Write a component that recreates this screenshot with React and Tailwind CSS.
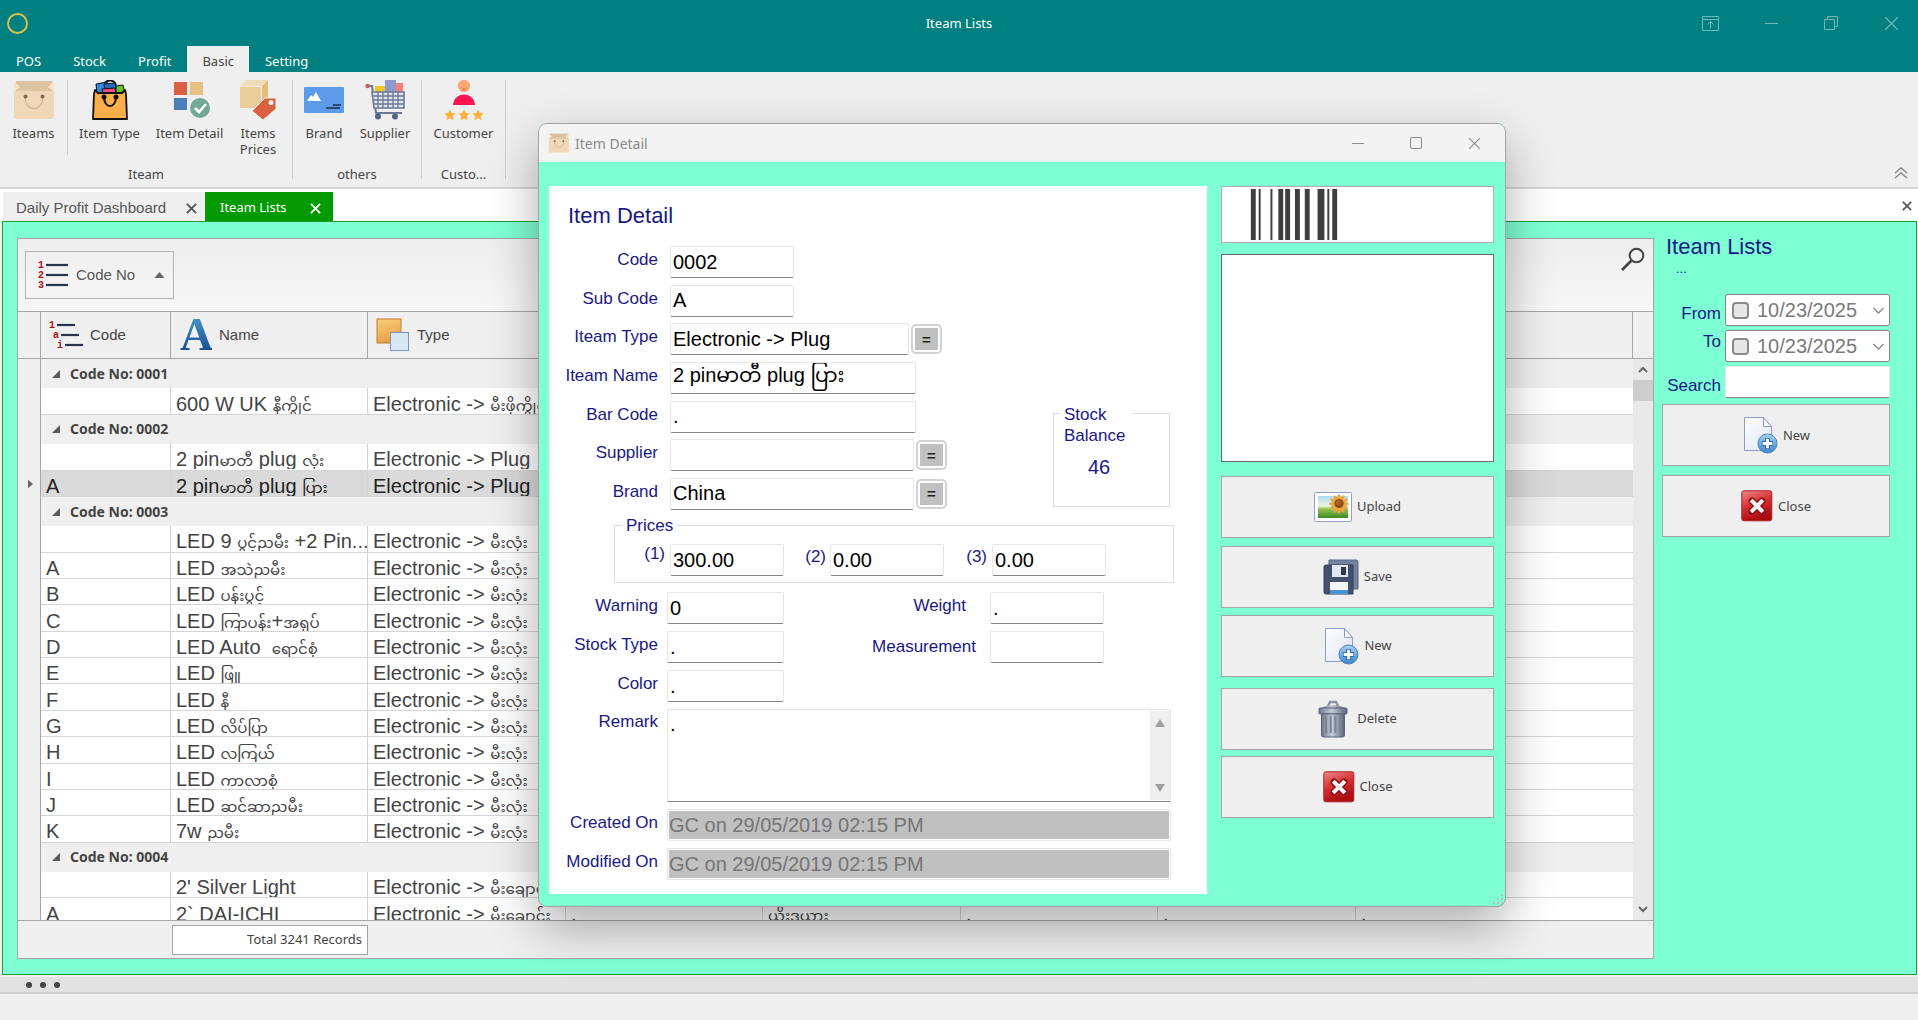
import React from "react";

const UI = "font-['Noto_Sans',sans-serif]";

/* ---------- icons ---------- */

function BagIcon({ className }) {
  return (
    <svg viewBox="0 0 40 40" className={className} aria-hidden="true">
      <rect x="0" y="8" width="40" height="31" rx="2" fill="#efd7b8" />
      <path d="M2 1h36l2 10H0z" fill="#dcc3a1" />
      <path d="M0 1l6 6-6 5zM40 1l-6 6 6 5z" fill="#f6e3ca" />
      <path d="M11 16c0 17 18 17 18 0" fill="none" stroke="#d3bb98" strokeWidth="1.5" />
      <circle cx="11.500" cy="16.500" r="2" fill="#7d6a55" />
      <circle cx="28.500" cy="16.500" r="2" fill="#7d6a55" />
    </svg>
  );
}

function ItemTypeIcon() {
  return (
    <svg viewBox="0 0 40 40" className="size-10" aria-hidden="true">
      <path d="M14 5c2-6 10-6 12 0" fill="none" stroke="#111" strokeWidth="2" />
      <path d="M6 4l11-2 2 9-12 3z" fill="#2d8ce0" stroke="#111" />
      <path d="M14 4l11-1 2 6-12 2z" fill="#1f6fc0" stroke="#111" />
      <path d="M26 6l7-1 2 8-9 1z" fill="#66c423" stroke="#111" />
      <path d="M12 9l13-1 1 6-13 1z" fill="#ee4c8b" stroke="#111" />
      <path d="M5 10l3 3h24l3-3 1 4 1 25H3l1-25z" fill="#fbae4a" stroke="#111" strokeWidth="1.800" strokeLinejoin="round" />
      <path d="M14 17c0 12 12 12 12 0" fill="none" stroke="#111" strokeWidth="2" />
      <circle cx="14" cy="17" r="2.500" fill="#111" />
      <circle cx="26" cy="17" r="2.500" fill="#111" />
    </svg>
  );
}

function ItemDetailIcon() {
  return (
    <svg viewBox="0 0 40 40" className="size-10" aria-hidden="true">
      <rect x="4" y="2" width="13" height="13" fill="#d9613f" />
      <rect x="20" y="2" width="13" height="13" fill="#e8c180" />
      <rect x="4" y="18" width="13" height="12" fill="#4a7fb9" />
      <circle cx="30" cy="28" r="10" fill="#74a998" />
      <path d="M25 28l4 4 7-8" fill="none" stroke="#fff" strokeWidth="2.600" />
    </svg>
  );
}

function PricesIcon() {
  return (
    <svg viewBox="0 0 40 40" className="size-10" aria-hidden="true">
      <path d="M2 6l6-6h22l-6 6z" fill="#efdcb9" />
      <path d="M24 6l6-6v18l-6 4z" fill="#e5bd78" />
      <rect x="2" y="7" width="21" height="21" fill="#ebcd9c" />
      <path d="M27 18h11v11L25 40 14 31z" fill="#d9613f" stroke="#efefef" />
      <circle cx="33" cy="22.500" r="2.500" fill="#efefef" />
    </svg>
  );
}

function BrandIcon() {
  return (
    <svg viewBox="0 0 40 40" className="size-10" aria-hidden="true">
      <rect x="0" y="7" width="40" height="26" rx="1" fill="#5c9bea" />
      <path d="M3 21l4-6 2 2 3-5 5 9z" fill="#fff" />
      <path d="M29 25h8M22 28h14" stroke="#2c4875" strokeWidth="1.800" />
    </svg>
  );
}

function SupplierIcon() {
  return (
    <svg viewBox="0 0 40 40" className="size-10" aria-hidden="true">
      <rect x="10" y="6" width="10" height="7" fill="#efc52a" />
      <rect x="30" y="3" width="8" height="10" fill="#f77f7c" />
      <rect x="20" y="0" width="11" height="13" fill="#8f9bcd" />
      <circle cx="2.500" cy="6" r="2.200" fill="#e0575b" />
      <path d="M4 6h3l4 27h26" fill="none" stroke="#6d7896" strokeWidth="2" />
      <path d="M7 12h32v16H9z" fill="#dfe3ec" stroke="#6d7896" strokeWidth="1.600" />
      <path d="M7 16h32M8 20h31M8 24h31M13 12v16M18 12v16M23 12v16M28 12v16M33 12v16" stroke="#6d7896" strokeWidth="1.300" />
      <circle cx="13" cy="36.500" r="3" fill="#566389" />
      <circle cx="30" cy="36.500" r="3" fill="#566389" />
    </svg>
  );
}

function CustomerIcon() {
  const star = "M0-5.500l1.700 3.600 3.900.5-2.900 2.700.8 3.900L0 3.300l-3.500 1.900.8-3.900-2.900-2.700 3.900-.5z";
  return (
    <svg viewBox="0 0 40 40" className="size-10" aria-hidden="true">
      <circle cx="20" cy="6" r="6.200" fill="#fca97a" />
      <path d="M17.500 8c1 1.600 4 1.600 5 0" fill="none" stroke="#d2693c" />
      <path d="M9 25c1-14 21-14 22 0z" fill="#fb1452" />
      {[6, 20, 34].map((x) => (
        <path key={x} d={star} transform={`translate(${x} 35)`} fill="#fbb13c" />
      ))}
    </svg>
  );
}

function NumberListIcon({ marks, step, className }) {
  return (
    <svg viewBox="0 0 34 32" className={className} aria-hidden="true">
      {marks.map((m, i) => (
        <g key={i}>
          <text x={i * step} y={9 + i * 10} fontSize="10" fontWeight="700" fontFamily="Liberation Mono, monospace" fill="#a31621">
            {m}
          </text>
          <path d={`M${8 + i * step} ${6 + i * 10}h${step ? 18 : 22}`} stroke="#27324c" strokeWidth="2.200" />
        </g>
      ))}
    </svg>
  );
}

function LetterIcon() {
  return (
    <span
      aria-hidden="true"
      className="inline-block w-[32px] bg-linear-to-b from-[#4fa0cf] to-[#123f86] bg-clip-text text-center font-['Liberation_Serif',serif] text-[46px] leading-[46px] font-bold text-transparent"
    >
      A
    </span>
  );
}

function LayersIcon() {
  return (
    <svg viewBox="0 0 34 36" className="h-9 w-[34px]" aria-hidden="true">
      <defs>
        <linearGradient id="gold" x1="0" y1="0" x2="0.300" y2="1">
          <stop offset="0" stopColor="#f8cf78" />
          <stop offset="1" stopColor="#e9a04a" />
        </linearGradient>
      </defs>
      <rect x="1" y="2" width="24" height="24" fill="url(#gold)" stroke="#c47a34" />
      <rect x="14.500" y="15.500" width="18" height="18" fill="#d9e6f3" stroke="#7d92bd" />
    </svg>
  );
}

function PictureIcon() {
  return (
    <svg viewBox="0 0 38 30" className="h-[30px] w-[38px]" aria-hidden="true">
      <defs>
        <linearGradient id="sky" x1="0" y1="0" x2="0" y2="1">
          <stop offset="0" stopColor="#a9d8f4" />
          <stop offset="0.450" stopColor="#eaf6dc" />
          <stop offset="0.600" stopColor="#8fc04d" />
          <stop offset="1" stopColor="#3f8a25" />
        </linearGradient>
      </defs>
      <rect x="0.500" y="0.500" width="37" height="29" rx="1" fill="#fff" stroke="#8ea0cb" />
      <rect x="4" y="4" width="30" height="22" fill="url(#sky)" />
      <g fill="#eaa747">
        {[0, 30, 60, 90, 120, 150].map((a) => (
          <ellipse key={a} cx="25" cy="12" rx="10" ry="2.500" transform={`rotate(${a} 25 12)`} />
        ))}
      </g>
      <circle cx="25" cy="11.500" r="4.600" fill="#8a4a18" />
      <circle cx="24.500" cy="10.500" r="2.600" fill="#a96527" />
    </svg>
  );
}

function SaveIcon() {
  return (
    <svg viewBox="0 0 36 36" className="size-9" aria-hidden="true">
      <path d="M6 1h27a2 2 0 012 2v27h-5V6H6z" fill="#73839f" stroke="#5b6985" />
      <path d="M3 6h27v29H3a2 2 0 01-2-2V8a2 2 0 012-2z" fill="#44506e" stroke="#38425c" />
      <rect x="9" y="6" width="16" height="12" fill="#dfe7f3" />
      <rect x="18" y="8" width="5" height="8" fill="#2f3850" />
      <rect x="7" y="23" width="18" height="12" fill="#f2f6fb" />
      <rect x="7" y="31" width="18" height="4" fill="#4c93d4" />
    </svg>
  );
}

function NewIcon() {
  return (
    <svg viewBox="0 0 36 38" className="h-[38px] w-9" aria-hidden="true">
      <defs>
        <linearGradient id="page" x1="0" y1="0" x2="1" y2="1">
          <stop offset="0" stopColor="#ffffff" />
          <stop offset="1" stopColor="#dce4f3" />
        </linearGradient>
        <linearGradient id="plus" x1="0" y1="0" x2="0" y2="1">
          <stop offset="0" stopColor="#a5d3f2" />
          <stop offset="1" stopColor="#3c86cc" />
        </linearGradient>
      </defs>
      <path d="M2.500 1.500h19l8 9v24h-27z" fill="url(#page)" stroke="#8c9cc8" />
      <path d="M21.500 1.500v9h8z" fill="#fff" stroke="#8c9cc8" />
      <circle cx="25.500" cy="27.500" r="9.500" fill="url(#plus)" stroke="#4b83bb" />
      <path d="M25.500 22v11M20 27.500h11" stroke="#3468a5" strokeWidth="5" />
      <path d="M25.500 22.700v9.600M20.700 27.500h9.600" stroke="#fff" strokeWidth="2.800" />
    </svg>
  );
}

function TrashIcon() {
  return (
    <svg viewBox="0 0 30 38" className="h-[38px] w-[30px]" aria-hidden="true">
      <defs>
        <linearGradient id="bin" x1="0" y1="0" x2="1" y2="0">
          <stop offset="0" stopColor="#6e778c" />
          <stop offset="0.450" stopColor="#c6cbd7" />
          <stop offset="1" stopColor="#5a6379" />
        </linearGradient>
      </defs>
      <path d="M10 6l2-4h6l2 4" fill="none" stroke="#8a92a4" strokeWidth="2.500" />
      <path d="M3 9c3-5 21-5 24 0z" fill="url(#bin)" />
      <rect x="1" y="8" width="28" height="6" rx="1" fill="url(#bin)" stroke="#5a6379" />
      <path d="M3.500 14h23v21a2 2 0 01-2 2h-19a2 2 0 01-2-2z" fill="url(#bin)" stroke="#5a6379" />
      <path d="M8 16v17M12.700 16v17M17.400 16v17M22 16v17" stroke="#7c8498" strokeWidth="2" />
    </svg>
  );
}

function RedCloseIcon() {
  return (
    <svg viewBox="0 0 32 32" className="size-8" aria-hidden="true">
      <defs>
        <linearGradient id="red" x1="0" y1="0" x2="0.400" y2="1">
          <stop offset="0" stopColor="#ee8a88" />
          <stop offset="0.500" stopColor="#d73336" />
          <stop offset="1" stopColor="#aa0c10" />
        </linearGradient>
      </defs>
      <rect x="0.800" y="0.800" width="30" height="30" rx="2" fill="url(#red)" stroke="#a92024" />
      <path d="M11 11l10 10M21 11L11 21" stroke="#8e1115" strokeWidth="7" strokeLinecap="round" />
      <path d="M11.500 11.500l9 9M20.500 11.500l-9 9" stroke="#f6f2f4" strokeWidth="4" strokeLinecap="square" />
    </svg>
  );
}

function Cross({ className, width = 1.2 }) {
  return (
    <svg viewBox="0 0 12 12" className={className} aria-hidden="true">
      <path d="M1 1l10 10M11 1L1 11" stroke="currentColor" strokeWidth={width} fill="none" />
    </svg>
  );
}

/* ---------- title bar and ribbon ---------- */

function TitleBar() {
  return (
    <header className={`${UI} flex h-[72px] shrink-0 flex-col bg-[#008080] text-[13px] text-white`}>
      <div className="grid h-[46px] grid-cols-[1fr_auto_1fr] items-center px-[7px]">
        <span className="size-[21px] rounded-full border-2 border-[#d9c04f]" />
        <h1 className="pt-[2px]">Iteam Lists</h1>
        <div className="flex items-center justify-end gap-[46px] pr-3 text-[#6fb9b9]">
          <button aria-label="Ribbon display options">
            <svg viewBox="0 0 17 15" className="h-[15px] w-[17px]" fill="none" stroke="currentColor">
              <path d="M.5.500h16v14H.5zM.5 3.500h16M8.500 12.500V5.500M5.500 8.500l3-3 3 3" />
            </svg>
          </button>
          <button aria-label="Minimize" className="py-2">
            <span className="block h-px w-[13px] bg-current" />
          </button>
          <button aria-label="Restore">
            <svg viewBox="0 0 14 14" className="size-[14px]" fill="none" stroke="currentColor">
              <path d="M.5 3.500h10v10H.5zM3.500 3V.5h10v10H11" />
            </svg>
          </button>
          <button aria-label="Close window">
            <Cross className="size-[15px]" width={0.9} />
          </button>
        </div>
      </div>
      <nav className="flex h-[26px] items-stretch">
        {["POS", "Stock", "Profit", "Basic", "Setting"].map((t) => (
          <button
            key={t}
            className={
              t === "Basic" ? "bg-[#efefef] px-[15px] pt-1.5 text-[#444]" : "px-4 pt-1.5"
            }
          >
            {t}
          </button>
        ))}
      </nav>
    </header>
  );
}

function RibbonButton({ icon, label, className }) {
  return (
    <button className={`flex flex-col items-center gap-[5px] px-1 leading-4 ${className}`}>
      {icon}
      <span>{label}</span>
    </button>
  );
}

function RibbonGroup({ title, children, className }) {
  return (
    <section className={`my-2 flex flex-col border-r border-[#d0d0d0] ${className}`}>
      <div className="flex flex-1">{children}</div>
      <h2 className="text-center leading-[10px]">{title}</h2>
    </section>
  );
}

function Ribbon() {
  return (
    <div className={`${UI} flex h-[117px] shrink-0 border-b-2 border-[#d6d6d6] bg-[#efefef] text-[13px] text-[#444]`}>
      <RibbonGroup title="Iteam" className="w-[293px]">
        <RibbonButton icon={<BagIcon className="size-10" />} label="Iteams" className="w-[67px]" />
        <div className="mb-[14px] border-r border-[#d0d0d0]" />
        <RibbonButton icon={<ItemTypeIcon />} label="Item Type" className="w-[83px]" />
        <RibbonButton icon={<ItemDetailIcon />} label="Item Detail" className="w-[77px]" />
        <RibbonButton icon={<PricesIcon />} label={<>Items<br />Prices</>} className="w-[60px]" />
      </RibbonGroup>
      <RibbonGroup title="others" className="w-[129px]">
        <RibbonButton icon={<BrandIcon />} label="Brand" className="w-[62px]" />
        <RibbonButton icon={<SupplierIcon />} label="Supplier" className="w-[60px]" />
      </RibbonGroup>
      <RibbonGroup title="Custo..." className="w-[84px]">
        <RibbonButton icon={<CustomerIcon />} label="Customer" className="w-[84px]" />
      </RibbonGroup>
      <button aria-label="Collapse ribbon" className="mt-auto mr-[10px] mb-2 ml-auto text-[#8a8a8a]">
        <svg viewBox="0 0 14 12" className="h-3 w-[14px]" fill="none" stroke="currentColor" strokeWidth="1.600">
          <path d="M1 6l6-5 6 5M1 11l6-5 6 5" />
        </svg>
      </button>
    </div>
  );
}

function DocumentTabs() {
  return (
    <div className="flex h-8 shrink-0 items-end bg-white pl-[3px] text-[#555]">
      <div className="flex h-[29px] w-[202px] items-center justify-between bg-[#efefef] pt-[3px] pr-2 pl-[13px] text-[15px]">
        <button>Daily Profit Dashboard</button>
        <button aria-label="Close Daily Profit Dashboard">
          <Cross className="size-[11px]" width={2} />
        </button>
      </div>
      <div className="flex h-[29px] w-[128px] items-center justify-between bg-[#049a04] pt-[3px] pr-3 pl-[15px] text-white">
        <button className={`${UI} text-[13px]`}>Iteam Lists</button>
        <button aria-label="Close Iteam Lists">
          <Cross className="size-[11px]" width={2} />
        </button>
      </div>
      <button aria-label="Close tab group" className="mr-[6px] mb-[10px] ml-auto">
        <Cross className="size-[10px]" width={2} />
      </button>
    </div>
  );
}

/* ---------- item grid ---------- */

const BULB = "Electronic -> မီးလုံး";
const TUBE = "Electronic -> မီးချောင်း";

const GROUPS = [
  { code: "0001", rows: [["", "600 W UK နီကွိုင်", "Electronic -> မီးဖိုကွိုင်"]] },
  {
    code: "0002",
    rows: [
      ["", "2 pinမာတီ plug လုံး", "Electronic -> Plug"],
      ["A", "2 pinမာတီ plug ပြား", "Electronic -> Plug"],
    ],
  },
  {
    code: "0003",
    rows: [
      ["", "LED 9 ပွင့်ညမီး +2 Pin...", BULB],
      ["A", "LED အသဲညမီး", BULB],
      ["B", "LED ပန်းပွင့်", BULB],
      ["C", "LED ကြာပန်း+အရုပ်", BULB],
      ["D", "LED Auto  ရောင်စုံ", BULB],
      ["E", "LED ဖြူ", BULB],
      ["F", "LED နီ", BULB],
      ["G", "LED လိပ်ပြာ", BULB],
      ["H", "LED လကြယ်", BULB],
      ["I", "LED ကာလာစုံ", BULB],
      ["J", "LED ဆင်ဆာညမီး", BULB],
      ["K", "7w ညမီး", BULB],
    ],
  },
  {
    code: "0004",
    rows: [
      ["", "2' Silver Light", TUBE, ".", ".", ".", ".", "."],
      ["A", "2` DAI-ICHI", TUBE, ".", "ယိုးဒယား", ".", ".", "."],
    ],
  },
];

/* Burmese runs are set smaller than the Latin text beside them. */
function MixedText({ text = "" }) {
  return text.split(/([\u1000-\u109f]+)/).map((part, i) =>
    i % 2 ? (
      <span key={i} className="text-[15px]">
        {part}
      </span>
    ) : (
      part
    )
  );
}

const HEAD_CELL = "border-r border-b border-[#a6a6a6] p-0";

function HeaderLabel({ icon, children, className }) {
  return (
    <div className={`flex h-[46px] items-center gap-[7px] ${className}`}>
      {icon}
      {children}
    </div>
  );
}

function ItemTable() {
  return (
    <table className="h-[613px] w-full table-fixed border-separate border-spacing-0 text-left text-[#444]">
      <colgroup>
        <col className="w-[23px]" />
        <col className="w-[130px]" />
        <col className="w-[197px]" />
        <col className="w-[198px]" />
        <col className="w-[197px]" />
        <col className="w-[198px]" />
        <col className="w-[197px]" />
        <col className="w-[198px]" />
        <col />
      </colgroup>
      <thead className="h-[47px] bg-[#efefef] text-[15px]">
        <tr>
          <th className={HEAD_CELL} />
          <th className={`${HEAD_CELL} font-normal`}>
            <HeaderLabel className="pl-2" icon={<NumberListIcon marks={["1", "a", "i"]} step={4} className="h-8 w-[34px]" />}>
              Code
            </HeaderLabel>
          </th>
          <th className={`${HEAD_CELL} font-normal`}>
            <HeaderLabel className="pl-[9px]" icon={<LetterIcon />}>Name</HeaderLabel>
          </th>
          <th className={`${HEAD_CELL} font-normal`}>
            <HeaderLabel className="pl-2" icon={<LayersIcon />}>Type</HeaderLabel>
          </th>
          {[0, 1, 2, 3, 4].map((i) => (
            <th key={i} className={HEAD_CELL} />
          ))}
        </tr>
      </thead>
      <tbody className="bg-white text-[20px]">
        {GROUPS.map((g) => (
          <React.Fragment key={g.code}>
            <tr className="h-[29px] bg-[#efefef]">
              <td className="border-r border-[#a6a6a6] p-0" />
              <th colSpan={8} className={`${UI} p-0 pl-[11px] text-[14px] leading-5 font-bold`}>
                <button className="flex items-center gap-[10px]">
                  <svg viewBox="0 0 8 8" className="size-2" aria-hidden="true">
                    <path d="M8 0v8H0z" fill="#5a5a5a" />
                  </svg>
                  Code No: {g.code}
                </button>
              </th>
            </tr>
            {g.rows.map((r, ri) => {
              const selected = g.code === "0002" && ri === 1;
              return (
                <tr key={ri} className={selected ? "h-[26px] bg-[#dadada] text-[#222]" : "h-[26px]"}>
                  <td className="border-r border-[#a6a6a6] bg-[#efefef] p-0">
                    {selected && (
                      <svg viewBox="0 0 6 10" className="ml-[10px] h-[10px] w-[5px]" aria-hidden="true">
                        <path d="M0 0l6 5-6 5z" fill="#666" />
                      </svg>
                    )}
                  </td>
                  {[0, 1, 2, 3, 4, 5, 6, 7].map((c) => (
                    <td
                      key={c}
                      className={
                        c === 7
                          ? "border-b border-[#d4d4d4] p-0 pl-[5px]"
                          : "border-r border-b border-[#d4d4d4] p-0 pl-[5px]"
                      }
                    >
                      <div className="h-[25px] overflow-hidden leading-[30px] whitespace-pre">
                        <MixedText text={r[c]} />
                      </div>
                    </td>
                  ))}
                </tr>
              );
            })}
          </React.Fragment>
        ))}
      </tbody>
    </table>
  );
}

function ItemGrid() {
  return (
    <section className="mt-4 mb-[15px] ml-[14px] flex min-w-0 flex-1 flex-col border border-[#a6a6a6] bg-[#efefef]">
      <div className="flex h-[72px] items-start justify-between bg-linear-to-b from-[#eeeeee] to-[#f7f7f7] pt-3 pr-2 pl-[7px]">
        <button className="flex h-[48px] w-[149px] items-center border border-[#b4b4b4] pl-3 text-[15px] text-[#555]">
          <NumberListIcon marks={["1", "2", "3"]} step={0} className="h-8 w-[34px]" />
          <span className="ml-1">Code No</span>
          <svg viewBox="0 0 10 6" className="mr-2 ml-auto h-[6px] w-[11px]" aria-hidden="true">
            <path d="M5 0l5 6H0z" fill="#666" />
          </svg>
        </button>
        <button aria-label="Find" className="-mt-3 pt-2">
          <svg viewBox="0 0 24 24" className="size-6" fill="none" stroke="#444">
            <circle cx="15.500" cy="8.500" r="6.800" strokeWidth="2" />
            <path d="M10.500 13.500L1 23" strokeWidth="2.600" />
          </svg>
        </button>
      </div>
      <div className="flex min-h-0 flex-1 overflow-hidden border-y border-[#a6a6a6]">
        <div className="min-w-0 flex-1">
          <ItemTable />
        </div>
        <div className="flex w-5 flex-col items-center bg-[#e9e9e9]">
          <div className="h-[47px] w-full shrink-0 border-b border-[#a6a6a6] bg-[#efefef]" />
          <svg viewBox="0 0 10 6" className="my-[7px] h-[7px] w-[10px] shrink-0" fill="none" stroke="#666" strokeWidth="2">
            <path d="M1 5.500l4-4 4 4" />
          </svg>
          <div className="h-[21px] w-full bg-[#cdcdcd]" />
          <svg viewBox="0 0 10 6" className="mt-auto mb-[7px] h-[7px] w-[10px] shrink-0" fill="none" stroke="#666" strokeWidth="2">
            <path d="M1 .5l4 4 4-4" />
          </svg>
        </div>
      </div>
      <div className="h-[37px] pt-1 pl-[154px]">
        <output className={`${UI} flex h-[30px] w-[196px] items-center justify-end border border-[#a6a6a6] bg-white pr-[5px] text-[13px] text-[#444]`}>
          Total 3241 Records
        </output>
      </div>
    </section>
  );
}

/* ---------- shared controls ---------- */

function BigButton({ icon, children, className }) {
  return (
    <button
      className={`${UI} flex h-[62px] w-full items-center justify-center gap-[5px] border border-[#a6a6a6] bg-[#efefef] text-[13px] text-[#444] ${className}`}
    >
      {icon}
      {children}
    </button>
  );
}

const FIELD =
  "block h-8 rounded-xs border border-[#e6e6e6] border-b-[#868686] bg-white pl-[2px] text-[20px] leading-6 text-black outline-none";

/* ---------- filter side panel ---------- */

function DateField({ id }) {
  return (
    <div className="flex h-8 items-center rounded-xs border border-[#868686] bg-white pl-1.5">
      <input
        type="checkbox"
        aria-label={`Use ${id} date`}
        className="size-[17px] shrink-0 appearance-none rounded-[4px] border-2 border-[#8a8a8a] bg-[#e6e6e6]"
      />
      <input id={id} defaultValue="10/23/2025" className="w-full min-w-0 pl-[8px] text-[20px] leading-6 text-[#7a7a7a] outline-none" />
      <button aria-label={`Open ${id} calendar`} className="px-[5px]">
        <svg viewBox="0 0 11 7" className="h-[7px] w-[11px]" fill="none" stroke="#8a8a8a" strokeWidth="1.400">
          <path d="M.5 1l5 5 5-5" />
        </svg>
      </button>
    </div>
  );
}

function SidePanel() {
  return (
    <aside className="w-[262px] shrink-0 pt-[11px] pr-[26px] pl-2 text-[17px] leading-6 text-[#191985]">
      <h2 className="pl-[4px] text-[22px] leading-7">Iteam Lists</h2>
      <p className="pl-[14px] text-[13px] leading-4">...</p>
      <div className="mt-[17px] grid grid-cols-[59px_1fr] items-center gap-x-1 gap-y-[4px] text-right">
        <label htmlFor="from" className="pt-2">From</label>
        <DateField id="from" />
        <label htmlFor="to" className="pb-2">To</label>
        <DateField id="to" />
        <label htmlFor="search" className="pt-2">Search</label>
        <input id="search" className={`${FIELD} w-full`} />
      </div>
      <BigButton className="mt-[6px]" icon={<NewIcon />}>New</BigButton>
      <BigButton className="mt-[9px]" icon={<RedCloseIcon />}>Close</BigButton>
    </aside>
  );
}

/* ---------- item detail dialog ---------- */

function LookupButton({ label }) {
  return (
    <button aria-label={label} className="ml-[2px] h-[30px] w-[31px] rounded-[5px] border-2 border-[#d2d2d2] bg-white p-[2px]">
      <span className="flex h-full items-center justify-center bg-[#c0c0c0] text-[15px] leading-none font-bold text-[#222]">=</span>
    </button>
  );
}

function Row({ id, label, children, top }) {
  return (
    <div className={top ? "flex items-start" : "flex items-center"}>
      <label htmlFor={id} className={top ? "w-[109px] shrink-0 pt-[3px] text-right" : "w-[109px] shrink-0 pb-1 text-right"}>
        {label}
      </label>
      {children}
    </div>
  );
}

const BARS = [
  [0, 5], [8, 2], [20, 2], [28, 5], [35, 5], [45, 5], [55, 5], [68, 7], [78, 2], [83, 5],
];

function DetailForm() {
  return (
    <form className="flex w-[658px] flex-col bg-white pb-[14px] text-[17px] leading-5 text-[#191985]" onSubmit={(e) => e.preventDefault()}>
      <h2 className="pt-[14px] pl-[19px] text-[22px] leading-8">Item Detail</h2>
      <div className="mt-[14px] flex items-end justify-between pr-[37px]">
        <div className="flex h-[264px] flex-col justify-between">
          <Row id="code" label="Code">
            <input id="code" defaultValue="0002" className={`${FIELD} ml-3 w-[124px]`} />
          </Row>
          <Row id="sub" label="Sub Code">
            <input id="sub" defaultValue="A" className={`${FIELD} ml-3 w-[124px]`} />
          </Row>
          <Row id="type" label="Iteam Type">
            <input id="type" defaultValue="Electronic -> Plug" className={`${FIELD} ml-3 w-[239px]`} />
            <LookupButton label="Choose type" />
          </Row>
          <Row id="name" label="Iteam Name">
            <input id="name" defaultValue="2 pinမာတီ plug ပြား" className={`${FIELD} ml-3 w-[246px]`} />
          </Row>
          <Row id="bar" label="Bar Code">
            <input id="bar" defaultValue="." className={`${FIELD} ml-3 w-[246px]`} />
          </Row>
          <Row id="supplier" label="Supplier">
            <input id="supplier" className={`${FIELD} ml-3 w-[244px]`} />
            <LookupButton label="Choose supplier" />
          </Row>
          <Row id="brand" label="Brand">
            <input id="brand" defaultValue="China" className={`${FIELD} ml-3 w-[244px]`} />
            <LookupButton label="Choose brand" />
          </Row>
        </div>
        <fieldset className="relative mb-[3px] h-[94px] w-[117px] border border-[#dcdcdc] pt-[43px] pl-[34px]">
          <legend className="absolute -top-[10px] left-1.5 w-[72px] bg-white pl-1 leading-[21px]">Stock Balance</legend>
          <output className="text-[20px]">46</output>
        </fieldset>
      </div>
      <fieldset className="relative mt-[15px] mr-[33px] ml-[65px] h-[58px] border border-[#dcdcdc] pt-[18px]">
        <legend className="absolute -top-[9px] left-[7px] bg-white px-1 leading-[18px]">Prices</legend>
        <div className="flex">
          <label htmlFor="p1" className="w-[50px] text-right">(1)</label>
          <input id="p1" defaultValue="300.00" className={`${FIELD} ml-[5px] w-[114px]`} />
          <label htmlFor="p2" className="w-[42px] pt-[3px] text-right">(2)</label>
          <input id="p2" defaultValue="0.00" className={`${FIELD} ml-1 w-[114px]`} />
          <label htmlFor="p3" className="w-[43px] pt-[3px] text-right">(3)</label>
          <input id="p3" defaultValue="0.00" className={`${FIELD} ml-[5px] w-[114px]`} />
        </div>
      </fieldset>
      <div className="mt-[9px] flex flex-col gap-[7px] pr-9">
        <Row id="warning" label="Warning">
          <input id="warning" defaultValue="0" className={`${FIELD} ml-[9px] w-[117px]`} />
          <label htmlFor="weight" className="w-[182px] pb-1 text-right">Weight</label>
          <input id="weight" defaultValue="." className={`${FIELD} ml-6 w-[114px]`} />
        </Row>
        <Row id="stocktype" label="Stock Type">
          <input id="stocktype" defaultValue="." className={`${FIELD} ml-[9px] w-[117px]`} />
          <label htmlFor="measurement" className="w-[192px] text-right">Measurement</label>
          <input id="measurement" className={`${FIELD} ml-[14px] w-[114px]`} />
        </Row>
        <Row id="color" label="Color">
          <input id="color" defaultValue="." className={`${FIELD} ml-[9px] w-[117px]`} />
        </Row>
        <Row id="remark" label="Remark" top>
          <div className="ml-[9px] flex h-[93px] flex-1 border border-[#e6e6e6] border-b-[#868686]">
            <textarea id="remark" defaultValue="." className="flex-1 resize-none overflow-hidden pt-[2px] pl-[2px] text-[20px] leading-6 text-black outline-none" />
            <div className="my-px flex w-5 flex-col items-center justify-between bg-[#efefef] py-2">
              <svg viewBox="0 0 10 8" className="h-2 w-[10px]"><path d="M5 0l5 8H0z" fill="#a0a0a0" /></svg>
              <svg viewBox="0 0 10 8" className="h-2 w-[10px]"><path d="M5 8l5-8H0z" fill="#a0a0a0" /></svg>
            </div>
          </div>
        </Row>
        {["Created On", "Modified On"].map((l) => (
          <Row key={l} id={l} label={l}>
            <input
              id={l}
              readOnly
              value="GC on 29/05/2019 02:15 PM"
              className="ml-[9px] h-8 min-w-0 flex-1 rounded-xs border border-[#e6e6e6] bg-[#c0c0c0] bg-clip-content p-px text-[20px] leading-6 text-[#757575] outline-none"
            />
          </Row>
        ))}
      </div>
    </form>
  );
}

function ItemDialog() {
  return (
    <div
      role="dialog"
      aria-label="Item Detail"
      className="absolute top-[123px] left-[538px] w-[968px] overflow-hidden rounded-[9px] border border-[#a3a3a3] bg-[#7fffd4] shadow-[0_20px_50px_rgba(0,0,0,0.32)]"
    >
      <div className={`${UI} flex h-[38px] items-center bg-[#f3f3f3] pl-[10px] text-[14px] text-[#8a8a8a]`}>
        <BagIcon className="size-5" />
        <span className="ml-1.5">Item Detail</span>
        <div className="ml-auto flex items-center gap-[46px] pr-6">
          <button aria-label="Minimize dialog" className="py-2">
            <span className="block h-px w-3 bg-[#8a8a8a]" />
          </button>
          <button aria-label="Maximize dialog">
            <span className="block size-3 rounded-[2px] border border-[#8a8a8a]" />
          </button>
          <button aria-label="Close dialog">
            <Cross className="size-[13px]" width={1} />
          </button>
        </div>
      </div>
      <div className="flex gap-[14px] pt-[24px] pr-[11px] pb-[12px] pl-[10px]">
        <DetailForm />
        <div className="flex flex-1 flex-col">
          <div className="flex h-[57px] border border-[#b0b0b0] bg-white py-[2px] pl-[28px]">
            <svg viewBox="0 0 88 52" className="h-[51px] w-[88px]" role="img" aria-label="Bar code">
              {BARS.map(([x, w]) => (
                <rect key={x} x={x} y="0" width={w} height="52" fill="#3f3f3f" />
              ))}
            </svg>
          </div>
          <div className="mt-[11px] h-[208px] border border-[#6a6a6a] bg-white" />
          <BigButton className="mt-[14px]" icon={<PictureIcon />}>Upload</BigButton>
          <BigButton className="mt-2" icon={<SaveIcon />}>Save</BigButton>
          <BigButton className="mt-[7px]" icon={<NewIcon />}>New</BigButton>
          <BigButton className="mt-[11px]" icon={<TrashIcon />}>
            <span className="pl-1">Delete</span>
          </BigButton>
          <BigButton className="mt-[6px]" icon={<RedCloseIcon />}>Close</BigButton>
        </div>
      </div>
      <svg viewBox="0 0 10 10" className="absolute right-[2px] bottom-[2px] size-[10px]" fill="#bdbdbd" aria-hidden="true">
        <path d="M8 0h2v2H8zM4 4h2v2H4zM8 4h2v2H8zM0 8h2v2H0zM4 8h2v2H4zM8 8h2v2H8z" />
      </svg>
    </div>
  );
}

export default function App() {
  return (
    <div className="relative flex h-screen flex-col overflow-hidden bg-[#efefef] font-['Liberation_Sans','Noto_Sans_Myanmar','Padauk',sans-serif]">
      <TitleBar />
      <Ribbon />
      <DocumentTabs />
      <main className="mr-px ml-[2px] flex min-h-0 flex-1 border border-[#1f9a35] bg-[#7fffd4]">
        <ItemGrid />
        <SidePanel />
      </main>
      <footer className="h-[45px] shrink-0 pt-0.5">
        <div className="flex h-[17px] items-center gap-2 border-b-2 border-[#cfcfcf] bg-[#e1e1e1] pl-[26px]">
          {[0, 1, 2].map((i) => (
            <span key={i} className="size-[6px] rounded-full bg-[#444]" />
          ))}
        </div>
      </footer>
      <ItemDialog />
    </div>
  );
}
